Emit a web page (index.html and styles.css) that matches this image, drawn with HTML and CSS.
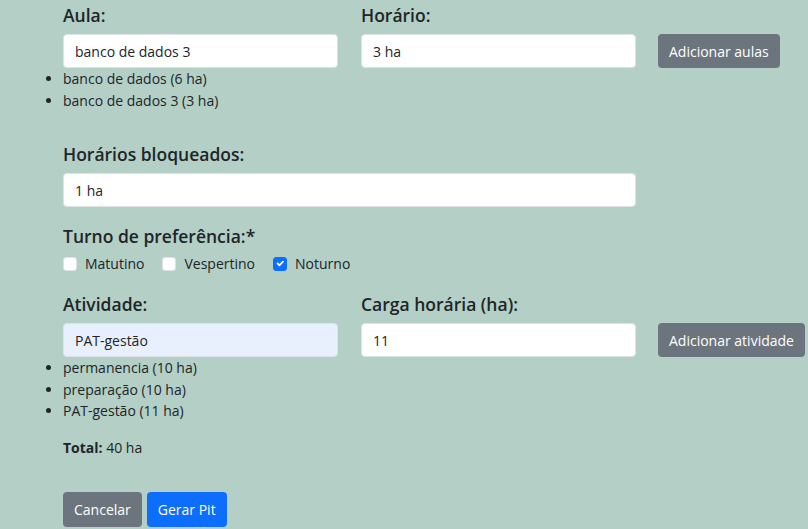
FILE: index.html
```html
<!DOCTYPE html>
<html lang="pt">
<head>
<meta charset="utf-8">
<link rel="stylesheet" href="styles.css">
</head>
<body>
<main class="page">
  <section class="pair-row">
    <div class="field">
      <label class="label">Aula:</label>
      <input class="control" type="text" value="banco de dados 3">
    </div>
    <div class="field">
      <label class="label">Horário:</label>
      <input class="control" type="text" value="3 ha">
    </div>
    <button class="btn btn-gray">Adicionar aulas</button>
  </section>
  <ul class="items">
    <li>banco de dados (6 ha)</li>
    <li>banco de dados 3 (3 ha)</li>
  </ul>

  <section class="block blocked">
    <label class="label">Horários bloqueados:</label>
    <input class="control wide" type="text" value="1 ha">
  </section>

  <section class="block shift">
    <div class="label">Turno de preferência:*</div>
    <div class="checks">
      <label class="check"><span class="box"></span>Matutino</label>
      <label class="check"><span class="box"></span>Vespertino</label>
      <label class="check"><span class="box on"><svg viewBox="0 0 20 20" width="13" height="13"><path d="M6 10l3 3l6-6" fill="none" stroke="#fff" stroke-width="3" stroke-linecap="round" stroke-linejoin="round"/></svg></span>Noturno</label>
    </div>
  </section>

  <section class="pair-row activity">
    <div class="field">
      <label class="label">Atividade:</label>
      <input class="control autofill" type="text" value="PAT-gestão">
    </div>
    <div class="field">
      <label class="label">Carga horária (ha):</label>
      <input class="control" type="text" value="11">
    </div>
    <button class="btn btn-gray">Adicionar atividade</button>
  </section>
  <ul class="items">
    <li>permanencia (10 ha)</li>
    <li>preparação (10 ha)</li>
    <li>PAT-gestão (11 ha)</li>
  </ul>

  <p class="total"><strong>Total:</strong> 40 ha</p>

  <div class="actions">
    <button class="btn btn-gray">Cancelar</button>
    <button class="btn btn-blue">Gerar Pit</button>
  </div>
</main>
</body>
</html>
```
FILE: styles.css
```css
* { box-sizing: border-box; }
body {
  margin: 0;
  background: #b3cfc6;
  font-family: "Open Sans", "Noto Sans", sans-serif;
  color: #212529;
  font-size: 14px;
}
.page {
  padding: 3px 0 0 63px;
}
.pair-row {
  display: grid;
  grid-template-columns: 275px 275px auto;
  column-gap: 23px;
  align-items: end;
  justify-items: start;
}
.pair-row .btn { margin-left: -1px; }
.field {
  display: flex;
  flex-direction: column;
  width: 100%;
}
.field .control { width: 100%; }
.label {
  display: block;
  font-size: 17.5px;
  font-weight: 600;
  line-height: 24px;
  margin-bottom: 7px;
}
.control {
  height: 34px;
  border: 1px solid #dee2e6;
  border-radius: 4px;
  background: #fff;
  padding: 0 11px;
  font-family: inherit;
  font-size: 14px;
  color: #212529;
}
.control.autofill { background: #e8f0fe; }
.control.wide { width: 573px; }
.btn {
  border: none;
  border-radius: 4px;
  height: 34px;
  padding: 0 11px;
  font-family: inherit;
  font-size: 14px;
  color: #fff;
}
.btn-gray { background: #6c757d; }
.btn-blue { background: #0d6efd; }
.items {
  margin: 0;
  padding: 0;
  line-height: 21.5px;
}
.blocked { margin-top: 31px; display: flex; flex-direction: column; }
.shift { margin-top: 17px; }
.shift .label { margin-bottom: 5px; }
.checks { display: flex; gap: 18px; }
.check { display: flex; align-items: center; gap: 8px; line-height: 21px; }
.box {
  width: 14px;
  height: 14px;
  border: 1px solid #dee2e6;
  border-radius: 3px;
  background: #fff;
  display: inline-flex;
  align-items: center;
  justify-content: center;
}
.box.on { background: #0d6efd; border-color: #0d6efd; }
.activity { margin-top: 18px; }
.total { margin: 15px 0 0; line-height: 21px; }
.actions { margin-top: 34px; display: flex; gap: 5px; }
.actions .btn { height: 35px; }
```
